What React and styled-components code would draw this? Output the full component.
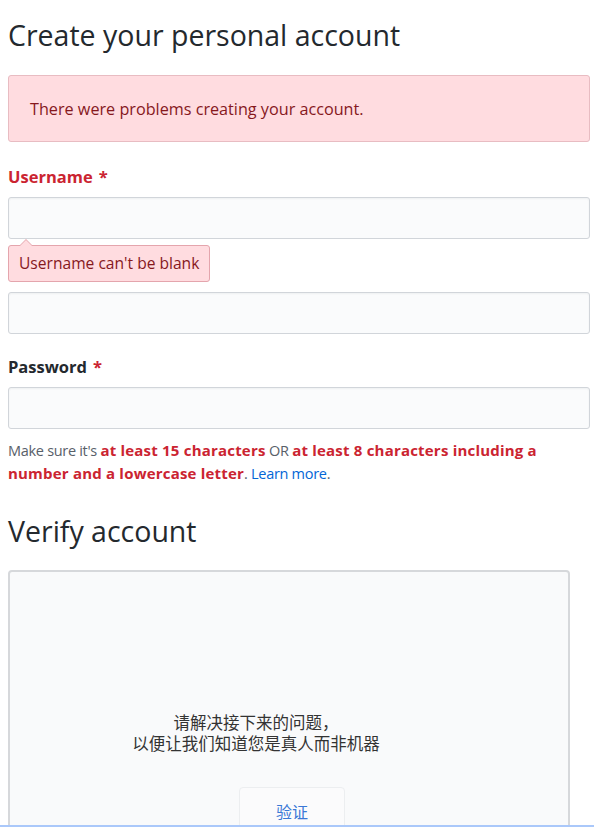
import React from 'react';
import styled, {createGlobalStyle} from 'styled-components';

const GlobalStyle = createGlobalStyle`
  html, body {
    margin: 0;
    padding: 0;
    background: #fff;
  }
  body {
    font-family: "Open Sans", "Noto Sans", "Noto Sans CJK SC", sans-serif;
    color: #24292e;
  }
`;

const Page = styled.div`
  box-sizing: border-box;
  height: 827px;
  overflow: hidden;
  padding: 15px 4px 0 8px;
  border-bottom: 2px solid #aac8fa;
`;

const Heading = styled.h2`
  margin: 0;
  font-size: 28.5px;
  font-weight: 400;
  line-height: 40px;
  color: #24292e;
`;

const Flash = styled.div`
  margin-top: 20px;
  height: 67px;
  box-sizing: border-box;
  display: flex;
  align-items: center;
  padding: 0 21px;
  background: #ffdce0;
  border: 1px solid #e8bcc2;
  border-radius: 3px;
  color: #86181d;
  font-size: 16.2px;
`;

const Group = styled.div`
  margin-top: ${p => p.$top || 0}px;
`;

const Label = styled.div`
  font-size: 16.5px;
  font-weight: 700;
  line-height: 24px;
  color: ${p => (p.$error ? '#cb2431' : '#24292e')};
  margin-bottom: 8px;
`;

const Star = styled.span`
  color: #cb2431;
  margin-left: 6px;
`;

const Input = styled.div`
  box-sizing: border-box;
  height: 42px;
  background: #fafbfc;
  border: 1px solid #d1d5da;
  border-radius: 3px;
  box-shadow: inset 0 1px 2px rgba(27, 31, 35, 0.05);
`;

const ErrorTip = styled.div`
  position: relative;
  width: fit-content;
  margin-top: 6px;
  padding: 0 10px;
  height: 37px;
  line-height: 35px;
  box-sizing: border-box;
  background: #ffdce0;
  border: 1px solid #e4a5ad;
  border-radius: 3px;
  color: #86181d;
  font-size: 15.6px;

  &::before,
  &::after {
    content: '';
    position: absolute;
    left: 11px;
    border: 6px solid transparent;
  }
  &::before {
    top: -13px;
    border-bottom-color: #e4a5ad;
  }
  &::after {
    top: -12px;
    border-bottom-color: #ffdce0;
  }
`;

const Note = styled.p`
  margin: 10px 0 0;
  max-width: 560px;
  font-size: 14.5px;
  line-height: 23px;
  color: #586069;
  letter-spacing: -0.3px;

  strong {
    color: #cb2431;
    font-size: 15px;
    font-weight: 700;
    letter-spacing: 0.2px;
  }
  a {
    color: #0366d6;
    text-decoration: none;
  }
`;

const SubHeading = styled(Heading)`
  margin-top: 26px;
`;

const Captcha = styled.div`
  margin-top: 19px;
  width: 562px;
  height: 300px;
  box-sizing: border-box;
  background: #f9fafb;
  border: 2px solid #d6d8db;
  border-radius: 4px;
  display: flex;
  flex-direction: column;
  align-items: center;
  padding-top: 140px;
`;

const CaptchaText = styled.div`
  margin-right: 66px;
  font-family: "Noto Sans CJK SC", sans-serif;
  font-size: 16.5px;
  line-height: 21px;
  color: #333;
  text-align: center;
`;

const VerifyButton = styled.div`
  margin: 33px 0 0 6px;
  width: 106px;
  height: 60px;
  box-sizing: border-box;
  border: 1px solid #eceef0;
  border-radius: 4px;
  background: #fbfbfc;
  display: flex;
  justify-content: center;
  padding-top: 11px;
  font-family: "Noto Sans CJK SC", sans-serif;
  font-size: 16px;
  color: #3a78d6;
`;

export default function App() {
  return (
    <Page>
      <GlobalStyle />
      <Heading>Create your personal account</Heading>
      <Flash>There were problems creating your account.</Flash>

      <Group $top={23}>
        <Label $error>
          Username<Star>*</Star>
        </Label>
        <Input />
        <ErrorTip>Username can't be blank</ErrorTip>
      </Group>

      <Group $top={10}>
        <Input />
      </Group>

      <Group $top={21}>
        <Label>
          Password<Star>*</Star>
        </Label>
        <Input />
        <Note>
          Make sure it's <strong>at least 15 characters</strong> OR{' '}
          <strong>at least 8 characters including a number and a lowercase letter</strong>.{' '}
          <a href="#learn">Learn more</a>.
        </Note>
      </Group>

      <SubHeading>Verify account</SubHeading>
      <Captcha>
        <CaptchaText>
          请解决接下来的问题，
          <br />
          以便让我们知道您是真人而非机器
        </CaptchaText>
        <VerifyButton>验证</VerifyButton>
      </Captcha>
    </Page>
  );
}
